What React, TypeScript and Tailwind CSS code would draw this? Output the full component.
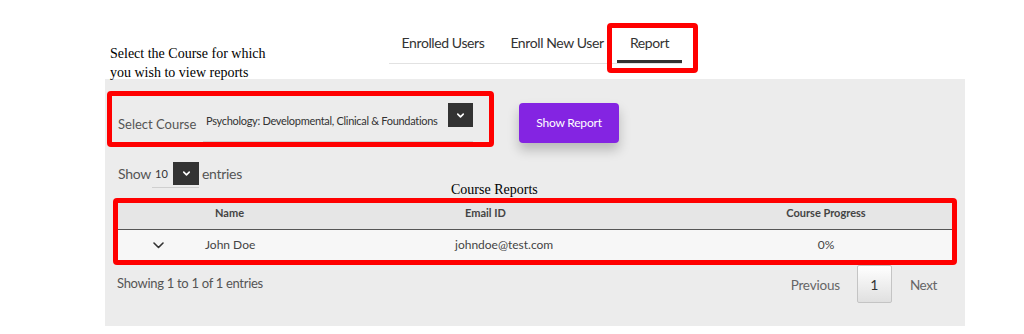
import { ChevronDown } from 'lucide-react'

const tabs = [
  { label: 'Enrolled Users', width: 'w-[108px]' },
  { label: 'Enroll New User', width: 'w-[120px]' },
]

const rows = [{ id: 1, name: 'John Doe', email: 'johndoe@test.com', progress: '0%' }]

function SmallChevron() {
  return (
    <svg width="11" height="7" viewBox="0 0 11 7" fill="none">
      <path d="M1 1l4.5 4.5L10 1" stroke="#333" strokeWidth="1.6" strokeLinecap="round" strokeLinejoin="round" />
    </svg>
  )
}

export default function App() {
  return (
    <div className="w-[1024px] h-[334px] overflow-hidden bg-white font-['Lato',sans-serif] text-[#444]">
      {/* Top: heading + tabs */}
      <div className="flex h-[79px] pl-[110px]">
        <div className="w-[166px] pt-[44px] font-['Liberation_Serif',serif] text-[14px] leading-[19px] text-black">
          Select the Course for which you wish to view reports
        </div>
        <div className="ml-[113px] pt-[26px]">
          <div className="flex border-b border-[#e2e2e2]">
            {tabs.map((t) => (
              <div key={t.label} className={`${t.width} h-[37px] pt-[8px] text-center text-[14px] leading-[18px] tracking-[-0.4px] text-[#333]`}>
                {t.label}
              </div>
            ))}
            <div className="relative w-[65px] h-[37px] border-b-[3px] border-[#333] pt-[8px] text-center text-[14px] leading-[18px] tracking-[-0.4px] text-[#333]">
              Report
              <div className="absolute -left-[10px] -right-[16px] -top-[3px] -bottom-[13px] rounded-[4px] border-[5px] border-[#ff0000]" />
            </div>
          </div>
        </div>
      </div>

      {/* Panel */}
      <div className="ml-[105px] w-[860px] h-[247px] bg-[#ececec] pt-[12px]">
        <div className="flex items-start pl-[2px]">
          <div className="flex w-[387px] h-[56px] rounded-[4px] border-[5px] border-[#ff0000]">
            <div className="w-[91px] pl-[6px] pt-[19px] text-[13px] leading-[18px] text-[#555]">Select Course</div>
            <div className="flex w-[270px] h-[46px] border-b border-[#cfcfcf]">
              <span className="pl-[3px] pt-[17px] text-[11px] leading-[16px] tracking-[-0.3px] text-[#333] whitespace-nowrap">
                Psychology: Developmental, Clinical &amp; Foundations
              </span>
              <div className="ml-auto mt-[7px] flex w-[25px] h-[24px] items-center justify-center bg-[#333]">
                <ChevronDown className="h-[11px] w-[11px] text-white" strokeWidth={3.5} />
              </div>
            </div>
          </div>
          <button
            type="button"
            className="ml-[25px] mt-[12px] w-[100px] h-[40px] rounded-[4px] bg-[#8424e2] text-[12px] tracking-[-0.2px] text-white shadow-[0_7px_12px_rgba(0,0,0,0.22)]"
          >
            Show Report
          </button>
        </div>

        {/* Show entries */}
        <div className="mt-[15px] flex h-[27px] items-start pl-[13px]">
          <span className="w-[34px] text-[14px] leading-[23px] tracking-[-0.3px] text-[#555]">Show</span>
          <div className="flex w-[47px] h-[26px] border-b border-[#cfcfcf]">
            <span className="pl-[3px] text-[11px] leading-[23px] text-[#333]">10</span>
            <div className="ml-auto flex w-[26px] h-[23px] items-center justify-center bg-[#333]">
              <ChevronDown className="h-[11px] w-[11px] text-white" strokeWidth={3.5} />
            </div>
          </div>
          <span className="ml-[3px] text-[14px] leading-[23px] tracking-[-0.3px] text-[#555]">entries</span>
        </div>

        <div className="-mt-[7px] h-[16px] pl-[346px] font-['Liberation_Serif',serif] text-[14px] leading-[16px] text-black">
          Course Reports
        </div>

        {/* Table */}
        <div className="ml-[8px] w-[844px] h-[67px] rounded-[4px] border-[5px] border-[#ff0000]">
          <div className="grid h-[27px] grid-cols-[87px_250px_265px_212px_20px] border-b border-[#555] bg-[#e6e6e6] text-[11px] font-bold leading-[20px] text-[#444]">
            <div />
            <div className="pl-[10px]">Name</div>
            <div className="pl-[10px]">Email ID</div>
            <div className="text-center">Course Progress</div>
            <div />
          </div>
          {rows.map((r) => (
            <div key={r.id} className="grid h-[30px] grid-cols-[87px_250px_265px_212px_20px] items-center bg-[#f7f7f7] text-[12px] text-[#444]">
              <div className="pl-[35px]">
                <SmallChevron />
              </div>
              <div>{r.name}</div>
              <div>{r.email}</div>
              <div className="text-center">{r.progress}</div>
              <div />
            </div>
          ))}
        </div>

        {/* Footer */}
        <div className="flex h-[38px] items-start">
          <span className="pl-[12px] pt-[9px] text-[13px] leading-[18px] tracking-[-0.3px] text-[#555]">
            Showing 1 to 1 of 1 entries
          </span>
          <div className="ml-auto flex items-start pr-[28px]">
            <span className="pr-[17px] pt-[11px] text-[13.5px] leading-[18px] tracking-[-0.2px] text-[#666]">Previous</span>
            <div className="flex w-[35px] h-[38px] items-center justify-center rounded-[2px] border border-[#c4c4c4] bg-gradient-to-b from-white to-[#e0e0e0] text-[14px] text-[#333]">
              1
            </div>
            <span className="pl-[18px] pt-[11px] text-[13.5px] leading-[18px] tracking-[-0.4px] text-[#666]">Next</span>
          </div>
        </div>
      </div>
    </div>
  )
}
